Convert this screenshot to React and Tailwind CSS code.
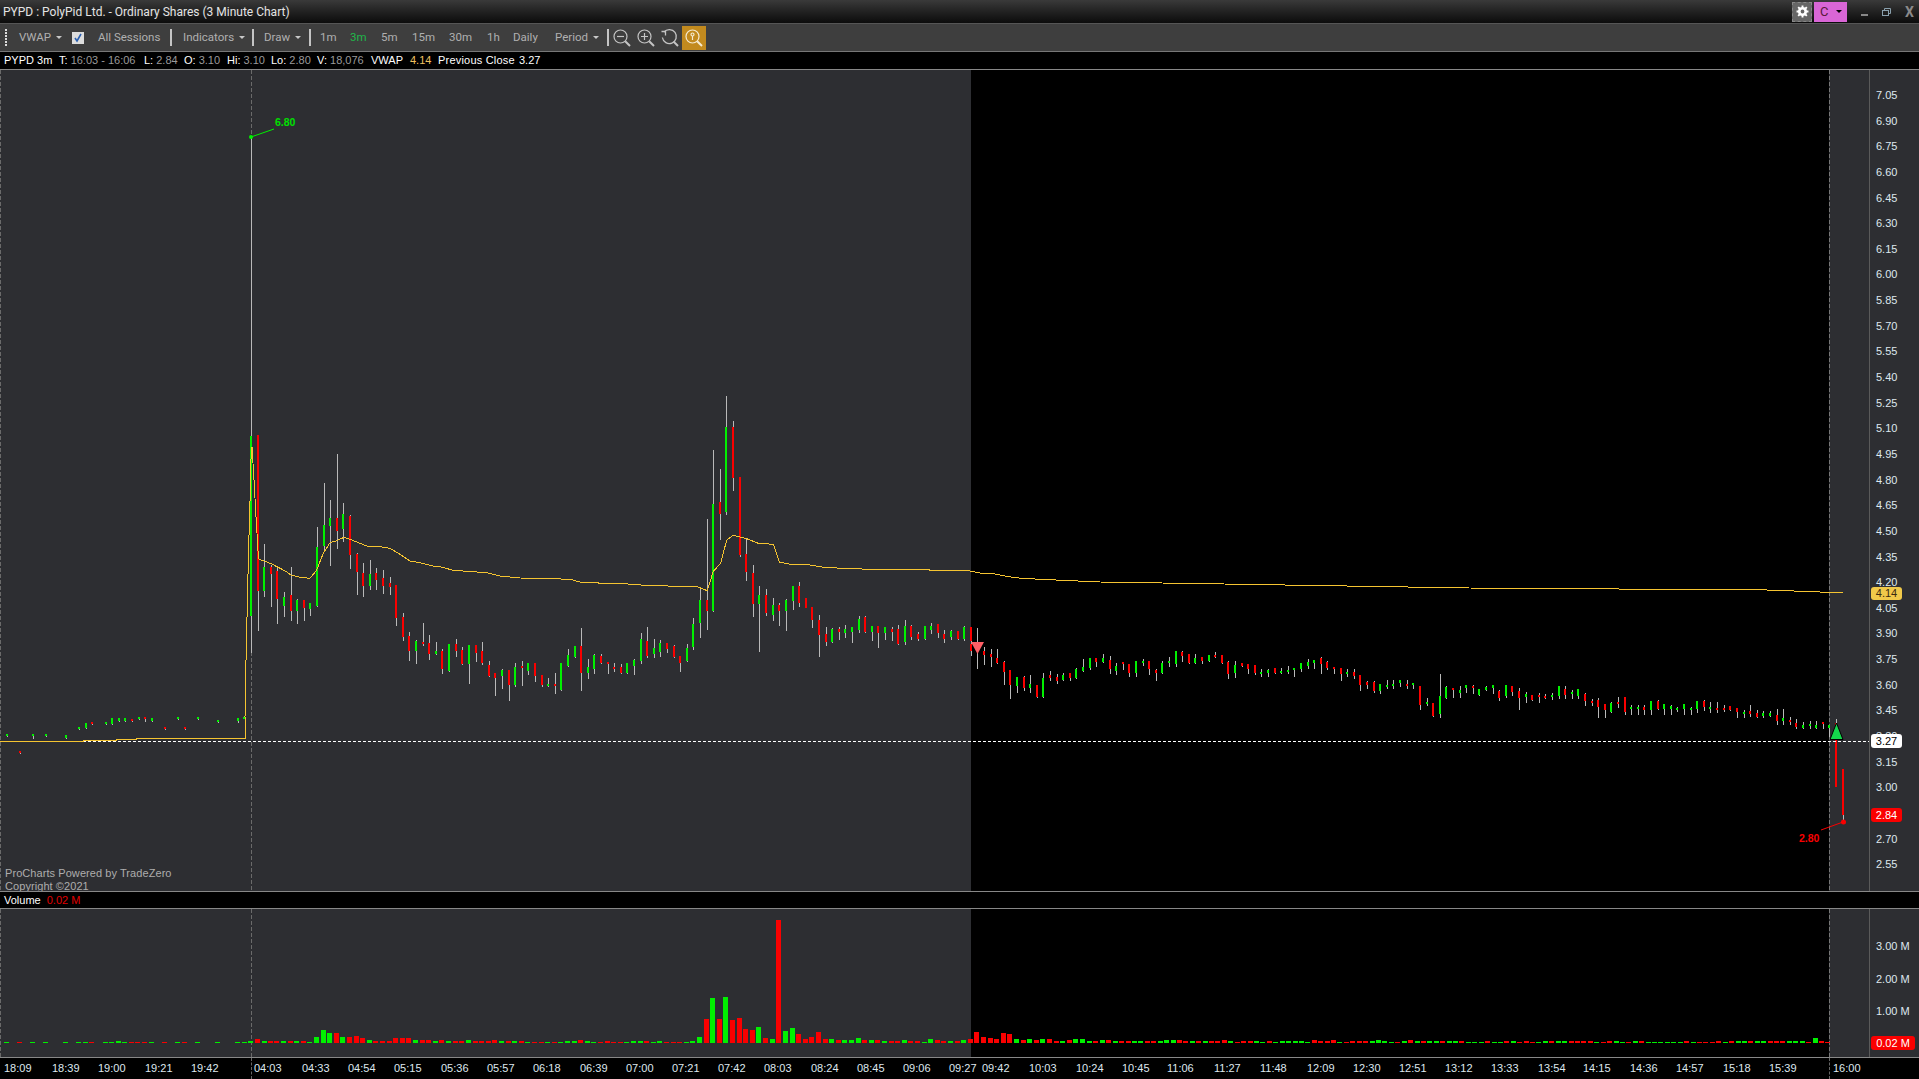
import React from 'react';

const GREEN = '#00f000';
const RED = '#fa0000';

// candle data read off the chart: [x, wickTop, wickBottom, bodyTop, bodyBottom, isGreen], in 3x crop units per block
const BLOCKS = [
  { ox: 0, oy: 700, rows: [
    [20,102,110,102,108,1],[60,153,161,153,159,0],[99,102,117,102,108,1],[138,102,110,102,108,1],[198,105,117,105,114,1],
    [237,81,90,81,87,1],[258,69,87,69,84,1],[276,66,75,66,72,0],[318,66,75,66,72,1],[336,54,75,54,72,1],[357,54,66,54,63,1],
    [375,54,66,54,63,1],[396,57,66,57,63,0],[417,51,60,51,57,1],[435,51,66,51,57,0],[456,54,66,54,63,1],[495,81,90,81,87,0],
    [534,51,60,51,57,1],[555,81,90,81,87,0],[594,51,60,51,57,1],[654,60,69,60,66,1],[714,54,69,54,63,1],
  ]},
  { ox: 200, oy: 420, rows: [
    [132,890,895,890,895,1],[152,-849,698,48,587,1],[174,45,632,45,513,0],[193,372,530,441,513,1],[213,435,560,441,461,0],
    [232,441,611,453,537,0],[252,516,590,531,558,1],[273,441,602,525,573,0],[291,537,611,540,573,1],[312,540,602,540,564,0],
    [330,549,587,549,567,1],[351,321,560,381,558,1],[372,189,390,315,378,1],[390,240,437,294,318,1],[411,102,387,294,333,0],
    [429,249,366,282,327,1],[450,285,447,288,405,0],[471,399,525,402,456,0],[490,429,530,459,498,0],[510,420,510,462,498,1],
    [529,444,510,459,480,0],[549,450,522,474,498,0],[570,471,525,489,501,0],[588,495,618,495,594,0],[609,579,663,591,651,0],
    [628,636,723,648,693,0],[648,660,732,663,693,1],[669,609,678,666,672,0],[687,645,720,669,702,0],[708,666,705,693,702,1],
    [726,687,762,693,747,0],[747,672,756,672,753,1],[768,657,711,672,693,0],[786,681,735,690,732,0],[807,675,792,675,732,1],
    [828,675,726,675,699,0],[846,666,735,693,729,0],[867,723,771,735,768,0],[885,759,828,759,774,0],[906,747,807,750,768,1],
    [927,750,843,750,795,0],[945,729,801,741,795,1],[966,723,798,738,744,0],[984,729,765,729,753,1],[1005,729,786,729,768,0],
    [1026,765,801,765,795,0],[1044,774,801,792,798,1],[1065,759,822,792,798,0],[1083,729,813,729,810,1],[1104,687,741,705,738,1],
    [1125,678,714,678,711,1],[1144,624,813,678,759,0],[1164,717,777,741,759,1],[1182,702,762,705,747,1],[1203,702,732,708,729,0],
    [1224,726,762,726,732,0],[1243,729,756,741,747,0],
  ]},
  { ox: 620, oy: 380, rows: [
    [2,852,882,861,879,0],[21,849,882,849,879,1],[42,837,885,840,858,1],[63,759,852,777,843,1],[81,741,834,783,828,0],
    [102,777,834,804,822,1],[120,780,831,789,816,1],[141,789,819,789,807,0],[162,795,834,798,831,0],[180,828,876,828,849,0],
    [201,792,846,804,843,1],[219,714,810,732,801,1],[240,624,774,660,729,1],[261,417,750,660,693,0],[279,210,696,372,693,1],
    [300,267,480,366,402,0],[318,48,405,141,396,1],[339,123,333,141,294,0],[360,291,531,291,525,0],[379,477,603,522,576,0],
    [399,555,711,579,672,0],[417,618,816,645,672,1],[438,627,708,645,699,0],[459,654,723,675,705,1],[477,669,738,675,693,0],
    [498,657,753,660,693,1],[519,618,690,618,663,1],[537,606,681,618,669,0],[558,654,684,654,684,0],[576,681,744,681,720,0],
    [597,705,831,720,765,0],[618,741,798,762,786,0],[636,744,789,747,786,1],[657,741,780,747,756,0],[675,735,774,747,759,1],
    [696,741,789,741,756,1],[717,708,759,717,750,1],[735,708,759,711,756,0],[756,738,783,738,756,1],[774,738,804,738,759,0],
    [795,741,780,741,759,1],[816,741,783,747,756,0],[834,735,795,747,792,0],[855,720,795,738,786,1],[873,735,780,738,771,0],
    [894,756,783,762,777,0],[915,738,780,738,777,1],[933,729,762,738,750,1],[954,732,774,732,759,0],[972,750,789,762,777,0],
    [993,750,780,753,771,1],[1014,753,780,753,777,0],[1032,738,783,741,777,1],[1053,741,828,741,783,0],[1053,790,828,792,813,0],
    [1072,744,867,790,810,0],[1092,801,855,813,825,0],[1113,807,861,822,831,0],[1131,807,852,834,849,0],[1152,843,915,846,876,0],
    [1170,870,957,870,915,0],[1191,891,939,891,918,1],[1212,888,933,891,924,0],[1230,885,939,912,924,1],[1251,915,954,915,951,0],
  ]},
  { ox: 1000, oy: 620, rows: [
    [129,159,234,174,232,1],[150,153,183,165,174,0],[171,162,192,171,183,0],[189,159,183,165,180,1],[210,159,183,159,174,0],
    [228,144,177,147,174,1],[249,117,156,141,153,1],[270,114,150,114,144,1],[288,114,141,114,126,0],[309,102,129,114,126,1],
    [330,108,162,120,147,0],[348,129,165,138,153,1],[369,126,150,126,132,0],[387,132,171,132,159,0],[408,123,171,123,159,1],
    [429,117,138,123,129,1],[447,123,165,123,147,0],[468,147,183,150,159,0],[486,123,162,129,159,1],[507,111,141,123,129,1],
    [528,93,141,93,132,1],[546,93,126,96,108,0],[567,102,132,102,129,0],[585,102,132,114,129,1],[606,111,132,111,123,0],
    [627,105,126,105,123,1],[645,96,114,105,111,0],[666,105,132,105,129,0],[684,123,177,126,162,0],[705,123,174,135,159,1],
    [726,129,141,129,138,0],[744,132,162,132,147,0],[765,135,165,135,159,0],[783,147,171,156,162,1],[804,147,171,150,159,1],
    [825,144,162,144,159,0],[843,144,162,153,159,1],[864,138,162,150,156,1],[882,144,171,144,150,1],[903,129,156,129,147,1],
    [924,117,147,126,138,1],[942,120,147,120,129,1],[963,111,162,114,132,0],[981,123,150,126,144,0],[1002,141,162,141,147,0],
    [1023,144,183,144,162,0],[1041,147,171,156,162,1],[1062,147,177,156,168,0],[1080,165,213,165,195,0],[1101,183,207,186,195,0],
    [1122,183,219,186,213,0],[1140,192,222,192,213,1],[1161,180,207,195,201,1],[1179,180,207,192,198,1],[1200,180,201,180,189,1],
    [1221,180,207,192,198,0],[1239,189,207,189,195,1],[1260,198,270,198,255,0],[1281,234,258,246,252,1],[1299,249,291,249,288,0],
    [1320,162,294,228,282,1],[1338,198,237,201,234,1],
  ]},
  { ox: 1400, oy: 660, rows: [
    [159,84,114,84,90,0],[180,78,114,90,99,1],[198,75,99,75,84,1],[219,75,102,78,84,0],[237,87,108,87,105,1],[258,78,93,81,90,1],
    [279,75,102,75,84,1],[297,90,123,93,114,0],[318,75,114,75,108,1],[336,78,108,78,96,0],[357,84,150,93,114,0],[378,96,129,102,111,1],
    [396,105,123,105,120,0],[417,99,129,105,111,0],[435,102,117,108,114,0],[456,99,120,105,111,1],[477,78,117,78,108,1],[495,78,117,87,105,0],
    [516,90,117,96,102,1],[534,87,117,87,108,1],[555,99,138,102,123,0],[576,117,138,123,129,0],[595,114,174,120,141,0],[615,132,174,132,150,0],
    [633,126,159,129,156,1],[654,111,144,126,132,0],[675,111,165,111,156,0],[693,135,165,141,147,1],[714,135,165,141,147,1],[732,135,165,141,150,0],
    [753,123,165,123,150,1],[774,120,150,123,147,0],[792,132,165,132,147,1],[813,135,165,138,147,1],[831,141,156,144,150,1],[852,132,165,132,147,1],
    [873,141,165,144,150,1],[891,123,159,123,147,1],[912,120,153,123,141,0],[930,126,159,141,147,1],[951,126,159,144,150,0],[972,135,156,144,150,0],
    [990,138,153,138,150,0],[1011,144,174,144,156,0],[1032,150,174,156,162,1],[1050,135,171,153,162,0],[1071,150,174,159,171,0],[1089,153,174,159,168,1],
    [1110,153,171,159,168,1],[1131,147,195,165,183,0],[1149,147,195,174,183,1],[1170,171,195,180,186,0],[1188,177,207,189,201,0],[1209,186,207,195,204,1],
    [1230,183,207,192,198,1],[1248,183,207,195,204,1],[1269,186,207,186,192,0],[1287,195,231,195,204,1],[1308,177,195,189,195,0],
  ]},
];

const CANDLES = BLOCKS.flatMap(({ ox, oy, rows }) =>
  rows.map(([x, wt, wb, bt, bb, up]) => ({
    x: Math.round(ox + x / 3),
    wt: oy + wt / 3,
    wb: oy + wb / 3,
    bt: oy + bt / 3,
    bb: oy + bb / 3,
    up,
  }))
);

const pts = (ox, oy, list) => list.map(([x, y]) => `${(ox + x / 3).toFixed(1)},${(oy + y / 3).toFixed(1)}`).join(' ');

const VWAP = [
  '0,741.5 83,741.5 83,740.5 116,740.5 116,739.5 136,739.5 136,738.5 245,738.5',
  pts(200, 420, [[135,890],[137,762],[140,632],[143,504],[146,375],[150,245],[153,118],[156,80],[159,130],[162,180],[165,235],[168,290],[171,340],[174,392],[177,418],[190,422],[215,432],[240,445],[260,455],[272,465],[300,472],[330,475],[350,450],[370,400],[390,368],[410,362],[432,352],[450,358],[480,370],[500,378],[540,380],[570,385],[600,403],[630,423],[660,428],[700,438],[720,440],[760,451],[820,455],[860,458],[900,468],[960,474],[1050,475],[1115,479],[1140,486],[1195,488],[1195,490],[1260,490]]),
  pts(620, 380, [[33,613],[75,616],[174,619],[232,620],[262,632],[280,574],[302,550],[320,480],[340,466],[380,476],[415,490],[460,493],[478,546],[510,553],[570,555],[610,562],[670,565],[750,568],[925,568],[930,571],[1045,572],[1085,580],[1125,582],[1165,590],[1205,595],[1260,598]]),
  '1100,582 1224,584 1469,588 1767,590 1820,592 1843,593',
].join(' ');

// volume bars: [x, height]
const volFrom = (ox, list) => list.map(([x, h, c]) => ({ x: ox + x / 3, h: h / 3, up: c === 'g' }));
const VOLUME = [
  ...volFrom(0, [[12,3,'g'],[50,3,'r'],[90,3,'g'],[130,3,'g'],[190,3,'g'],[228,3,'g'],[248,3,'g'],[268,3,'r'],[310,3,'g'],[328,3,'g'],[348,6,'g'],[367,3,'g'],[387,3,'r'],[406,3,'r'],[425,3,'r'],[446,3,'g'],[485,3,'r'],[525,3,'g'],[545,3,'r'],[585,3,'g'],[645,3,'g'],[705,3,'g'],[725,3,'g'],[745,5,'g'],
    [765,12,'r'],[785,6,'g'],[805,5,'r'],[823,5,'r'],[843,6,'g'],[863,5,'r'],[882,6,'g'],[903,5,'r'],[922,2,'g'],[942,18,'g'],[963,39,'g'],[982,30,'g'],[1002,30,'r'],[1021,18,'g'],[1041,18,'r'],[1062,21,'r'],[1080,15,'r'],[1101,9,'g'],[1120,5,'r'],[1140,5,'r'],[1160,5,'r'],[1180,15,'r'],[1200,15,'r'],[1218,15,'r'],[1240,9,'g'],[1260,9,'r'],[1278,9,'r'],[1298,6,'g'],[1317,9,'r'],[1338,6,'g'],[1358,5,'r'],[1378,5,'r'],[1398,9,'g'],[1418,5,'r'],[1438,5,'r'],[1458,5,'r']]),
  ...volFrom(490, [[6,9,'r'],[27,6,'g'],[47,6,'r'],[66,6,'g'],[86,6,'r'],[105,3,'g'],[126,3,'r'],[146,3,'r'],[165,3,'g'],[185,3,'r'],[204,3,'g'],[225,6,'g'],[245,6,'g'],[264,9,'r'],[285,6,'g'],[303,3,'g'],[324,3,'r'],[345,6,'r'],[363,3,'r'],[384,3,'r'],[402,3,'g'],[423,6,'g'],[444,6,'g'],[462,6,'r'],[483,3,'g']]),
  ...volFrom(650, [[20,6,'g'],[41,3,'r'],[63,3,'r'],[81,3,'r'],[102,3,'g'],[120,6,'g'],[141,18,'g'],[162,72,'r'],[180,135,'g'],[201,72,'r'],[219,138,'g'],[240,69,'r'],[261,75,'r'],[279,42,'r'],[300,39,'r'],[318,48,'g'],[339,15,'r'],[360,12,'g'],[378,369,'r'],[399,36,'g'],[420,45,'g'],[438,27,'r'],[459,12,'r'],[477,18,'r'],[498,33,'r'],[519,12,'r'],[537,12,'g'],[558,9,'r'],[576,9,'g'],[597,9,'g'],[618,15,'g'],[636,9,'r'],[657,9,'g'],[675,9,'r'],[696,6,'g'],[717,6,'r'],[735,6,'r'],[756,9,'g'],[774,6,'r'],[795,6,'r'],[816,3,'g'],[834,12,'g'],[855,9,'r'],[873,6,'r'],[894,6,'g'],[915,6,'r'],[933,9,'g'],[954,12,'r'],[972,33,'r'],[993,18,'r'],[1014,15,'r'],[1032,12,'r'],[1053,30,'r'],[1071,27,'r'],[1092,12,'g'],[1113,9,'r'],[1131,12,'g'],[1152,9,'r'],[1170,12,'g'],[1191,12,'r'],[1212,6,'r'],[1230,6,'g'],[1251,9,'r'],[1269,12,'g'],[1290,12,'g'],[1311,6,'g'],[1329,6,'r']]),
];
// the flat stretch of the regular session, letter = colour, digit = height
const LATE = 'g9 r9 g6 r6 r6 g6 g6 r6 r6 g6 g9 g9 r9 r6 g6 r6 g6 r6 r6 r9 g6 r3 r6 r6 g6 g3 r6 g3 g6 g6 g6 g6 g3 r9 r6 r6 r9 g3 r3 r6 r6 r6 g6 g9 g6 g3 r3 g6 r9 g6 r6 g6 g6 r6 g6 g6 r6 g3 g3 g3 r6 g3 g3 r6 g6 r3 r6 r3 g3 g6 r6 g6 g6 r6 r6 r6 r6 g3 r3 r6 g6 g3 r3 g6 r6 g3 g3 g3 g3 g3 g3 r6 g3 r3 r3 r3 r6 g3 r6 g6 g6 r6 g6 g6 r6 r6 r6 g6 g6 g6 r3 g15 r6 r3'.split(' ');
LATE.forEach((s, i) => {
  VOLUME.push({ x: 1096 + 6.42 * (i + 1) - 2.5, h: Number(s.slice(1)) / 3, up: s[0] === 'g' });
});

const TIMES = [
  ['18:09',5],['18:39',53],['19:00',99],['19:21',146],['19:42',192],['04:03',255],['04:33',303],['04:54',349],['05:15',395],['05:36',442],['05:57',488],
  ['06:18',534],['06:39',581],['07:00',627],['07:21',673],['07:42',719],['08:03',765],['08:24',812],['08:45',858],['09:06',904],['09:27',950],['09:42',983],
  ['10:03',1030],['10:24',1077],['10:45',1123],['11:06',1168],['11:27',1215],['11:48',1261],['12:09',1308],['12:30',1354],['12:51',1400],['13:12',1446],
  ['13:33',1492],['13:54',1539],['14:15',1584],['14:36',1631],['14:57',1677],['15:18',1724],['15:39',1770],['16:00',1834],
];

const PRICES = Array.from({ length: 31 }, (_, i) => (7.05 - i * 0.15).toFixed(2));

function Caret() {
  return <span className="ml-[5px] w-0 h-0 border-x-[3px] border-x-transparent border-t-[3px] border-t-[#c8c8c8]" />;
}

function Sep() {
  return <span className="w-[2px] h-[17px] bg-[#c4c4c4]" />;
}

function Grip() {
  return (
    <svg width="4" height="20" className="ml-[4px]">
      {[1, 4, 7, 10, 13, 16].map((y) => <rect key={y} x="1" y={y} width="2" height="2" fill="#ddd" />)}
    </svg>
  );
}

function Mag({ children, stroke = '#c4c4c4' }) {
  return (
    <svg width="20" height="20" viewBox="0 0 20 20" fill="none" stroke={stroke} strokeWidth="1.2">
      <circle cx="8.5" cy="8.5" r="6.5" />
      <path d="M13.2 13.2 L18 18" strokeWidth="2" />
      {children}
    </svg>
  );
}

function Panes({ children, className }) {
  return (
    <div className={`relative flex ${className}`}>
      <div className="w-[971px] bg-[#2d2e32]" />
      <div className="w-[858px] bg-black" />
      <div className="w-[40px] bg-[#2d2e32]" />
      {children}
    </div>
  );
}

function PriceChart() {
  return (
    <svg className="absolute inset-0" width="1919" height="821" viewBox="0 70 1919 821" shapeRendering="crispEdges">
      <line x1="0.5" y1="70" x2="0.5" y2="891" stroke="#6a6a6a" strokeDasharray="4 2" />
      <line x1="251.5" y1="70" x2="251.5" y2="891" stroke="#6a6a6a" strokeDasharray="4 2" />
      <line x1="1829.5" y1="70" x2="1829.5" y2="891" stroke="#777" strokeDasharray="4 2" />
      {CANDLES.map((c, i) => (
        <g key={i}>
          <rect x={c.x} y={c.wt} width="1" height={c.wb - c.wt} fill="#b9b9b9" />
          <rect x={c.x - 1} y={c.bt} width="2" height={Math.max(c.bb - c.bt, 2)} fill={c.up ? GREEN : RED} />
        </g>
      ))}
      <rect x="1835" y="740" width="2" height="47" fill={RED} />
      <rect x="1842" y="769" width="2" height="46" fill={RED} />
      <rect x="1843" y="815" width="1" height="7" fill="#b9b9b9" />
      <line x1="83" y1="741.5" x2="1869" y2="741.5" stroke="#fff" strokeDasharray="3 2" />
      <polyline points={VWAP} fill="none" stroke="#f5c431" strokeWidth="1" />
      <polygon points="971,642 984,642 977.5,654" fill="#ff5f66" shapeRendering="auto" />
      <polygon points="1836.5,723 1843,739.5 1830,739.5" fill="#14d64c" stroke="#000" strokeWidth="1" shapeRendering="auto" />
      <g shapeRendering="auto">
        <line x1="251" y1="137" x2="274" y2="129" stroke={GREEN} />
        <circle cx="251" cy="137" r="2" fill={GREEN} />
        <line x1="1843" y1="822" x2="1821" y2="830" stroke={RED} />
        <circle cx="1843.5" cy="822" r="2.5" fill={RED} />
      </g>
    </svg>
  );
}

function VolumeChart() {
  return (
    <svg className="absolute inset-0" width="1919" height="148" viewBox="0 909 1919 148" shapeRendering="crispEdges">
      <line x1="0.5" y1="909" x2="0.5" y2="1057" stroke="#6a6a6a" strokeDasharray="4 2" />
      <line x1="251.5" y1="909" x2="251.5" y2="1057" stroke="#6a6a6a" strokeDasharray="4 2" />
      <line x1="1829.5" y1="909" x2="1829.5" y2="1057" stroke="#777" strokeDasharray="4 2" />
      {VOLUME.map((b, i) => (
        <rect key={i} x={b.x} y={1043 - b.h} width="5" height={b.h} fill={b.up ? GREEN : RED} />
      ))}
    </svg>
  );
}

export default function App() {
  return (
    <div className="w-[1919px] h-[1079px] overflow-hidden flex flex-col bg-black font-['Liberation_Sans',sans-serif] text-[11px] text-white">
      {/* Title bar */}
      <div className="h-[24px] shrink-0 flex items-center pl-[3px] bg-gradient-to-b from-[#3a3a3a] to-[#0c0c0c] border-b border-[#555] font-['Roboto',sans-serif] text-[12px] text-[#e4e4e4]">
        <span>PYPD : PolyPid Ltd. - Ordinary Shares (3 Minute Chart)</span>
        <div className="ml-auto flex items-center">
          <div className="w-[20px] h-[20px] bg-[#666] border border-dashed border-[#888] flex items-center justify-center">
            <svg width="13" height="13" viewBox="0 0 24 24" fill="none" stroke="#fff" strokeWidth="5">
              <circle cx="12" cy="12" r="6" />
              <path d="M12 1v4M12 19v4M1 12h4M19 12h4M4 4l3 3M17 17l3 3M4 20l3-3M17 7l3-3" strokeWidth="3.5" />
            </svg>
          </div>
          <div className="ml-[2px] w-[33px] h-[20px] bg-[#d966d6] flex items-center pl-[6px] text-[#5a1a3a] text-[13px]">
            C
            <span className="ml-[8px] w-0 h-0 border-x-[3px] border-x-transparent border-t-[3px] border-t-black" />
          </div>
          <div className="w-[72px] flex items-center justify-between pl-[14px] pr-[5px]">
            <span className="w-[7px] h-[2px] mt-[6px] bg-[#888]" />
            <svg width="9" height="8" viewBox="0 0 9 8" fill="none" stroke="#8aa0ad"><rect x="0.5" y="2.5" width="6" height="5" /><path d="M2.5 2.5v-2h6v5h-2" /></svg>
            <span className="text-[#8a8a8a] text-[14px] font-bold leading-none">X</span>
          </div>
        </div>
      </div>

      {/* Toolbar */}
      <div className="h-[28px] shrink-0 flex items-center bg-[#3e3e3e] font-['Roboto',sans-serif] text-[11.5px] text-[#b0b0b0] border-b border-[#777]">
        <div className="w-[19px] flex"><Grip /></div>
        <div className="w-[53px] flex items-center">VWAP<Caret /></div>
        <div className="w-[26px] flex">
          <span className="w-[12px] h-[12px] bg-[#ddd] flex items-center justify-center">
            <svg width="10" height="10" viewBox="0 0 10 10" fill="none" stroke="#2a5fb0" strokeWidth="1.6"><path d="M2 5l2 3 4-7" /></svg>
          </span>
        </div>
        <div className="w-[72px]">All Sessions</div>
        <div className="w-[13px] flex"><Sep /></div>
        <div className="w-[69px] flex items-center">Indicators<Caret /></div>
        <div className="w-[12px] flex"><Sep /></div>
        <div className="w-[45px] flex items-center">Draw<Caret /></div>
        <div className="w-[11px] flex"><Sep /></div>
        <div className="w-[30px]">1m</div>
        <div className="w-[31px] text-[#1fb84a]">3m</div>
        <div className="w-[31px]">5m</div>
        <div className="w-[37px]">15m</div>
        <div className="w-[38px]">30m</div>
        <div className="w-[26px]">1h</div>
        <div className="w-[42px]">Daily</div>
        <div className="w-[52px] flex items-center">Period<Caret /></div>
        <div className="w-[5px] flex"><Sep /></div>
        <div className="flex items-center gap-[4px]">
          <Mag><path d="M5 8.5h7" /></Mag>
          <Mag><path d="M5 8.5h7M8.5 5v7" /></Mag>
          <svg width="20" height="20" viewBox="0 0 20 20" fill="none" stroke="#c4c4c4" strokeWidth="1.3">
            <path d="M4 4a7 7 0 1 1-1.6 5.5" />
            <path d="M1.5 3.5H5.5V7.5" />
            <path d="M13.5 13.5L18 18" strokeWidth="2" />
          </svg>
        </div>
        <span className="ml-[2px] w-[24px] h-[24px] bg-[#c28a1e] flex items-center justify-center">
          <Mag stroke="#f5ead0"><circle cx="8.5" cy="6.5" r="1.5" /><path d="M8.5 8v4" /></Mag>
        </span>
      </div>

      {/* Quote line */}
      <div className="h-[18px] shrink-0 flex items-center pl-[4px] bg-black border-b border-[#888] whitespace-pre">
        <div className="w-[55px]">PYPD 3m</div>
        <div className="w-[85px]">T: <span className="text-[#9a9a9a]">16:03 - 16:06</span></div>
        <div className="w-[40px]">L: <span className="text-[#9a9a9a]">2.84</span></div>
        <div className="w-[43px]">O: <span className="text-[#9a9a9a]">3.10</span></div>
        <div className="w-[44px]">Hi: <span className="text-[#9a9a9a]">3.10</span></div>
        <div className="w-[46px]">Lo: <span className="text-[#9a9a9a]">2.80</span></div>
        <div className="w-[54px]">V: <span className="text-[#9a9a9a]">18,076</span></div>
        <div className="w-[39px]">VWAP</div>
        <div className="w-[28px] text-[#f0c060]">4.14</div>
        <div className="w-[81px] tracking-[0.2px]">Previous Close</div>
        <div>3.27</div>
      </div>

      {/* Price pane */}
      <Panes className="h-[821px] shrink-0">
        <div className="w-[50px] border-l border-[#5a5a5a] bg-[#2d2e32] pt-[13px] text-[#dfe8ef] relative z-10">
          {PRICES.map((p) => (
            <div key={p} className="h-[25.65px] leading-[25.65px] pl-[6px]">{p}</div>
          ))}
          <div className="absolute left-[1px] top-[517px] w-[31px] h-[13px] leading-[13px] text-center rounded-[3px] bg-[#f0c94a] text-[#3a2a10]">4.14</div>
          <div className="absolute left-[1px] top-[664px] w-[31px] h-[14px] leading-[14px] text-center rounded-[3px] bg-white text-black">3.27</div>
          <div className="absolute left-[1px] top-[738px] w-[31px] h-[14px] leading-[14px] text-center rounded-[3px] bg-[#fa0000] text-white">2.84</div>
        </div>
        <PriceChart />
        <span className="absolute left-[275px] top-[45px] text-[#00e000] font-bold text-[10.5px]">6.80</span>
        <span className="absolute left-[1799px] top-[761px] text-[#fa0000] font-bold text-[10.5px]">2.80</span>
        <div className="absolute left-[5px] bottom-[-2px] text-[#adadad] tracking-[0.07px] leading-[13px]">
          <div>ProCharts Powered by TradeZero</div>
          <div>Copyright ©2021</div>
        </div>
      </Panes>

      {/* Volume header */}
      <div className="relative z-10 h-[18px] shrink-0 flex items-center pl-[4px] bg-black border-y border-[#888]">
        <span>Volume</span>
        <span className="ml-[6px] text-[#e00000]">0.02 M</span>
      </div>

      {/* Volume pane */}
      <Panes className="h-[148px] shrink-0">
        <div className="w-[50px] border-l border-[#5a5a5a] bg-[#2d2e32] pt-[21px] text-[#dfe8ef] relative z-10">
          {['3.00 M', '2.00 M', '1.00 M'].map((v) => (
            <div key={v} className="h-[32.5px] leading-[32.5px] pl-[6px]">{v}</div>
          ))}
          <div className="absolute left-[1px] top-[127px] w-[44px] h-[14px] leading-[14px] text-center rounded-[3px] bg-[#fa0000] text-white">0.02 M</div>
        </div>
        <VolumeChart />
      </Panes>

      {/* Time axis */}
      <div className="relative h-[22px] shrink-0 flex items-center bg-black border-t border-[#888] text-[#dfe8ef] pl-[4px]">
        {TIMES.map(([t, x], i) => (
          <span key={t} style={{ width: (TIMES[i + 1] ? TIMES[i + 1][1] : 1919) - x }}>{t}</span>
        ))}
        <span className="absolute left-[251px] top-0 h-full border-l border-dashed border-[#666]" />
        <span className="absolute left-[1829px] top-0 h-full border-l border-dashed border-[#666]" />
      </div>
    </div>
  );
}
